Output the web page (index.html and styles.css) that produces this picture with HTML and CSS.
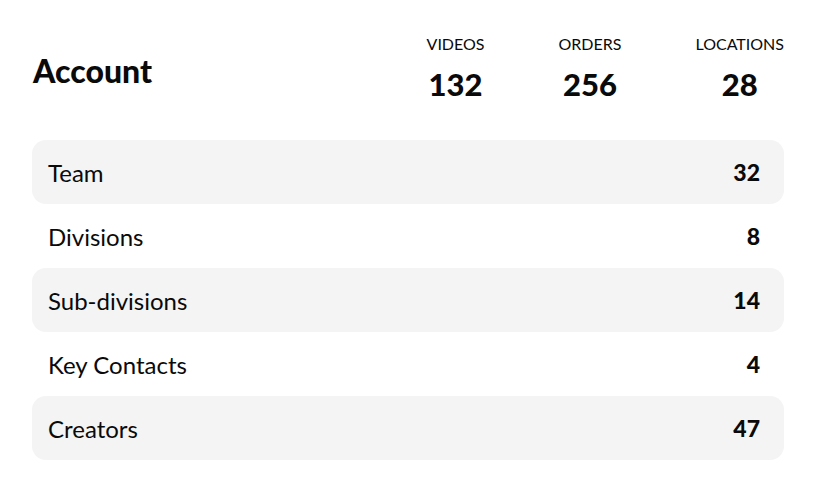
FILE: index.html
```html
<!DOCTYPE html>
<html>
<head>
<meta charset="utf-8">
<link rel="stylesheet" href="styles.css">
</head>
<body>
<div class="card">
  <div class="header">
    <h1 class="title">Account</h1>
    <div class="stats">
      <div class="stat"><div class="stat-label">VIDEOS</div><div class="stat-value">132</div></div>
      <div class="stat"><div class="stat-label">ORDERS</div><div class="stat-value">256</div></div>
      <div class="stat"><div class="stat-label">LOCATIONS</div><div class="stat-value">28</div></div>
    </div>
  </div>
  <div class="rows">
    <div class="row shaded"><span class="label">Team</span><span class="value">32</span></div>
    <div class="row"><span class="label">Divisions</span><span class="value">8</span></div>
    <div class="row shaded"><span class="label">Sub-divisions</span><span class="value">14</span></div>
    <div class="row"><span class="label">Key Contacts</span><span class="value">4</span></div>
    <div class="row shaded"><span class="label">Creators</span><span class="value">47</span></div>
  </div>
</div>
</body>
</html>
```
FILE: styles.css
```css
html, body {
  margin: 0;
  background: #ffffff;
}
body {
  font-family: Lato, "Open Sans", sans-serif;
  color: #0a0a0a;
}
.card {
  padding: 32px 32px 0 32px;
}
.header {
  display: flex;
  justify-content: space-between;
  align-items: center;
  height: 76px;
  margin-bottom: 32px;
}
.title {
  margin: 0;
  font-size: 32px;
  font-weight: 900;
  padding-left: 1px;
}
.stats {
  display: flex;
  gap: 74px;
}
.stat {
  display: flex;
  flex-direction: column;
  align-items: center;
}
.stat-label {
  font-size: 16px;
  line-height: 14px;
}
.stat-value {
  font-size: 31px;
  font-weight: 900;
  line-height: 38px;
  margin-top: 14px;
}
.rows {
  display: flex;
  flex-direction: column;
}
.row {
  display: flex;
  justify-content: space-between;
  align-items: center;
  height: 64px;
  padding: 0 24px 0 16px;
  border-radius: 14px;
}
.row.shaded {
  background: #f4f4f4;
}
.label {
  font-size: 24px;
}
.value {
  font-size: 23px;
  font-weight: 900;
}
```
